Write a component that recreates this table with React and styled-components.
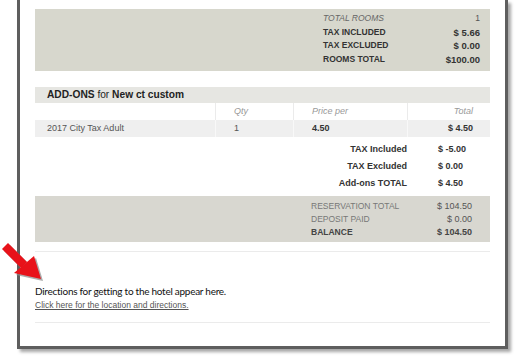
import React from "react";
import styled, { createGlobalStyle } from "styled-components";

const GlobalStyle = createGlobalStyle`
  html, body {
    margin: 0;
    padding: 0;
    background: #ffffff;
  }
  body {
    width: 517px;
    height: 357px;
    overflow: hidden;
    position: relative;
    font-family: "Liberation Sans", Arial, sans-serif;
  }
`;

const Panel = styled.div`
  margin-left: 17px;
  width: 491px;
  box-sizing: border-box;
  border: 3px solid #5e5e5e;
  border-top: none;
  background: #ffffff;
  padding: 9px 15px 23px;
  box-shadow: 3px 3px 3px rgba(0, 0, 0, 0.35);
`;

const SummaryBox = styled.div`
  background: ${(p) => p.$bg || "#d7d7cd"};
  padding: ${(p) => p.$pad};
  display: grid;
  grid-template-columns: 1fr auto;
  grid-auto-rows: ${(p) => p.$lh || "13.5px"};
  align-items: center;
  font-size: 8.5px;
  line-height: ${(p) => p.$lh || "13.5px"};
  margin-top: ${(p) => p.$mt || "0"};
`;

const SumLabel = styled.div`
  color: ${(p) => p.$color || "#333"};
  font-weight: ${(p) => (p.$bold ? 700 : 400)};
  font-style: ${(p) => (p.$italic ? "italic" : "normal")};
`;

const SumValue = styled.div`
  text-align: right;
  font-size: ${(p) => p.$size || "8.5px"};
  color: ${(p) => p.$color || "#333"};
  font-weight: ${(p) => (p.$bold ? 700 : 400)};
`;

const Table = styled.div`
  margin-top: 16px;
`;

const TableHead = styled.div`
  background: #e6e6e2;
  height: 16px;
  line-height: 16px;
  padding-left: 12px;
  font-size: 10.2px;
  color: #222;
  b {
    font-weight: 700;
  }
`;

const Row = styled.div`
  display: grid;
  grid-template-columns: 180px 78px 114px 83px;
  height: 17px;
  line-height: 17px;
  font-size: 9px;
  background: ${(p) => p.$bg || "#ffffff"};
`;

const Cell = styled.div`
  padding: ${(p) => (p.$first ? "0 0 0 12px" : p.$right ? "0 17px 0 0" : "0 0 0 18px")};
  text-align: ${(p) => (p.$right ? "right" : "left")};
  border-left: ${(p) => (p.$first ? "none" : `1px solid ${p.$line || "#ebebeb"}`)};
  color: ${(p) => p.$color || "#555"};
  font-style: ${(p) => (p.$italic ? "italic" : "normal")};
  font-weight: ${(p) => (p.$bold ? 700 : 400)};
`;

const Totals = styled.div`
  margin-top: 4px;
  display: grid;
  grid-template-columns: 372px 40px;
  column-gap: 31px;
  font-size: 9px;
  line-height: 17px;
  font-weight: 700;
  color: #333;
`;

const TotLabel = styled.div`
  text-align: right;
`;

const TotValue = styled.div`
  text-align: left;
`;

const Divider = styled.div`
  height: 1px;
  background: #ebebeb;
  margin-top: ${(p) => p.$mt};
`;

const Directions = styled.div`
  margin-top: 32px;
  font-family: Lato, "Liberation Sans", sans-serif;
  font-size: 10px;
  letter-spacing: -0.27px;
  line-height: 14px;
  color: #111;
`;

const DirLink = styled.a`
  display: block;
  margin-top: 1px;
  font-family: "Liberation Sans", Arial, sans-serif;
  font-size: 8.5px;
  letter-spacing: 0;
  line-height: 13px;
  color: #555;
  text-decoration: underline;
`;

const Arrow = styled.svg`
  position: absolute;
  left: 0;
  top: 238px;
`;

export default function App() {
  return (
    <>
      <GlobalStyle />
      <Panel>
        <SummaryBox $pad="3px 10px 5px 288px">
          <SumLabel $italic $color="#666">TOTAL ROOMS</SumLabel>
          <SumValue $color="#555">1</SumValue>
          <SumLabel $bold>TAX INCLUDED</SumLabel>
          <SumValue $bold $size="9.5px">$ 5.66</SumValue>
          <SumLabel $bold>TAX EXCLUDED</SumLabel>
          <SumValue $bold $size="9.5px">$ 0.00</SumValue>
          <SumLabel $bold>ROOMS TOTAL</SumLabel>
          <SumValue $bold $size="9.5px">$100.00</SumValue>
        </SummaryBox>

        <Table>
          <TableHead>
            <b>ADD-ONS</b> for <b>New ct custom</b>
          </TableHead>
          <Row>
            <Cell $first />
            <Cell $italic $color="#999">Qty</Cell>
            <Cell $italic $color="#999">Price per</Cell>
            <Cell $italic $right $color="#999">Total</Cell>
          </Row>
          <Row $bg="#efefef">
            <Cell $first>2017 City Tax Adult</Cell>
            <Cell $line="#f8f8f8">1</Cell>
            <Cell $line="#f8f8f8" $bold $color="#333">4.50</Cell>
            <Cell $line="#f8f8f8" $right $bold $color="#333">$ 4.50</Cell>
          </Row>
        </Table>

        <Totals>
          <TotLabel>TAX Included</TotLabel>
          <TotValue>$ -5.00</TotValue>
          <TotLabel>TAX Excluded</TotLabel>
          <TotValue>$ 0.00</TotValue>
          <TotLabel>Add-ons TOTAL</TotLabel>
          <TotValue>$ 4.50</TotValue>
        </Totals>

        <SummaryBox $bg="#d8d7d0" $pad="3.5px 18px 3.5px 276px" $lh="13px" $mt="4px">
          <SumLabel $color="#777">RESERVATION TOTAL</SumLabel>
          <SumValue $color="#555" $size="9px">$ 104.50</SumValue>
          <SumLabel $color="#777">DEPOSIT PAID</SumLabel>
          <SumValue $color="#555" $size="9px">$ 0.00</SumValue>
          <SumLabel $bold $color="#444">BALANCE</SumLabel>
          <SumValue $bold $color="#444" $size="9px">$ 104.50</SumValue>
        </SummaryBox>

        <Divider $mt="9px" />

        <Directions>
          Directions for getting to the hotel appear here.
          <DirLink href="#">Click here for the location and directions.</DirLink>
        </Directions>

        <Divider $mt="10px" />
      </Panel>

      <Arrow width="46" height="50" viewBox="0 238 46 50">
        <g fill="#8a8a8a" opacity="0.7" transform="translate(2 2)">
          <polygon points="2,249 8,243 27,262 21,268" />
          <polygon points="14,273 34,256 41,279" />
        </g>
        <g fill="#e8121a">
          <polygon points="2,249 8,243 27,262 21,268" />
          <polygon points="14,273 34,256 41,279" />
        </g>
      </Arrow>
    </>
  );
}
